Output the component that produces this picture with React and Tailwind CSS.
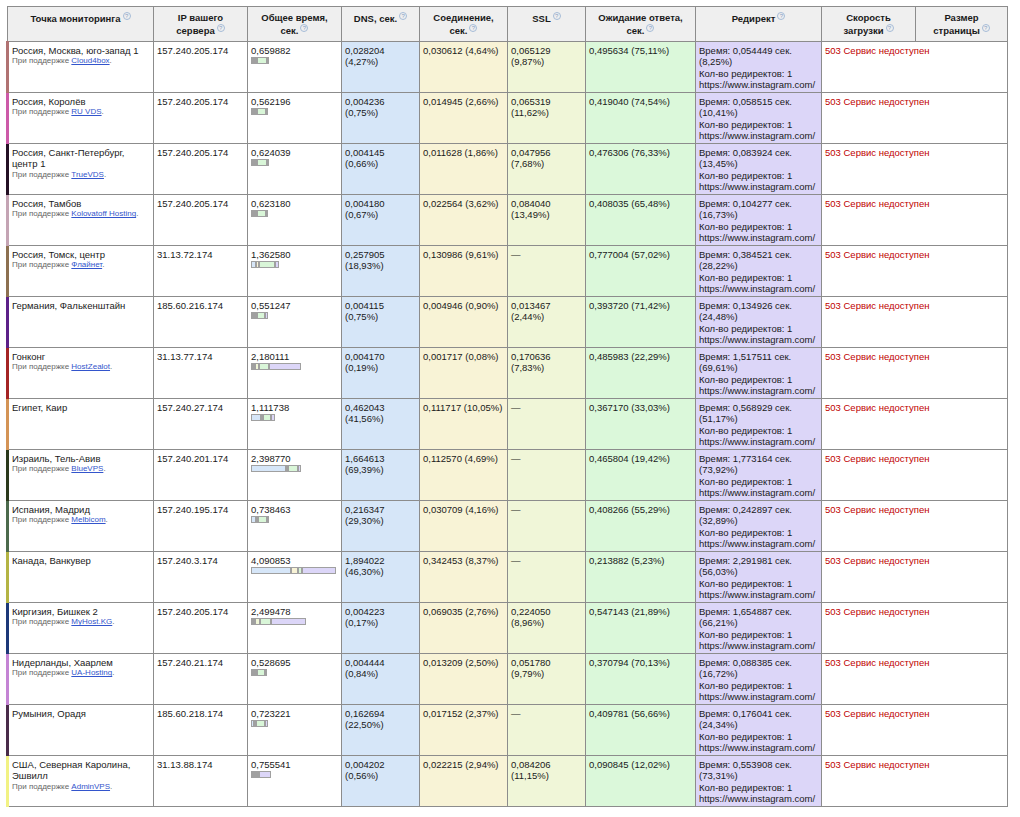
const rows = [
  { name: 'Россия, Москва, юго-запад 1', host: 'Cloud4box', color: '#b07272', ip: '157.240.205.174', total: '0,659882', dns: '0,028204 (4,27%)', conn: '0,030612 (4,64%)', ssl: '0,065129 (9,87%)', wait: '0,495634 (75,11%)', redir: ['0,054449', '8,25%'] },
  { name: 'Россия, Королёв', host: 'RU VDS', color: '#cc5aa8', ip: '157.240.205.174', total: '0,562196', dns: '0,004236 (0,75%)', conn: '0,014945 (2,66%)', ssl: '0,065319 (11,62%)', wait: '0,419040 (74,54%)', redir: ['0,058515', '10,41%'] },
  { name: 'Россия, Санкт-Петербург, центр 1', host: 'TrueVDS', color: '#241024', ip: '157.240.205.174', total: '0,624039', dns: '0,004145 (0,66%)', conn: '0,011628 (1,86%)', ssl: '0,047956 (7,68%)', wait: '0,476306 (76,33%)', redir: ['0,083924', '13,45%'] },
  { name: 'Россия, Тамбов', host: 'Kolovatoff Hosting', color: '#c4a4b4', ip: '157.240.205.174', total: '0,623180', dns: '0,004180 (0,67%)', conn: '0,022564 (3,62%)', ssl: '0,084040 (13,49%)', wait: '0,408035 (65,48%)', redir: ['0,104277', '16,73%'] },
  { name: 'Россия, Томск, центр', host: 'Флайнет', color: '#8c7050', ip: '31.13.72.174', total: '1,362580', dns: '0,257905 (18,93%)', conn: '0,130986 (9,61%)', ssl: null, wait: '0,777004 (57,02%)', redir: ['0,384521', '28,22%'] },
  { name: 'Германия, Фалькенштайн', host: null, color: '#5c2088', ip: '185.60.216.174', total: '0,551247', dns: '0,004115 (0,75%)', conn: '0,004946 (0,90%)', ssl: '0,013467 (2,44%)', wait: '0,393720 (71,42%)', redir: ['0,134926', '24,48%'] },
  { name: 'Гонконг', host: 'HostZealot', color: '#a42424', ip: '31.13.77.174', total: '2,180111', dns: '0,004170 (0,19%)', conn: '0,001717 (0,08%)', ssl: '0,170636 (7,83%)', wait: '0,485983 (22,29%)', redir: ['1,517511', '69,61%'] },
  { name: 'Египет, Каир', host: null, color: '#d49456', ip: '157.240.27.174', total: '1,111738', dns: '0,462043 (41,56%)', conn: '0,111717 (10,05%)', ssl: null, wait: '0,367170 (33,03%)', redir: ['0,568929', '51,17%'] },
  { name: 'Израиль, Тель-Авив', host: 'BlueVPS', color: '#2c3a1c', ip: '157.240.201.174', total: '2,398770', dns: '1,664613 (69,39%)', conn: '0,112570 (4,69%)', ssl: null, wait: '0,465804 (19,42%)', redir: ['1,773164', '73,92%'] },
  { name: 'Испания, Мадрид', host: 'Melbicom', color: '#4c6a4c', ip: '157.240.195.174', total: '0,738463', dns: '0,216347 (29,30%)', conn: '0,030709 (4,16%)', ssl: null, wait: '0,408266 (55,29%)', redir: ['0,242897', '32,89%'] },
  { name: 'Канада, Ванкувер', host: null, color: '#b4b444', ip: '157.240.3.174', total: '4,090853', dns: '1,894022 (46,30%)', conn: '0,342453 (8,37%)', ssl: null, wait: '0,213882 (5,23%)', redir: ['2,291981', '56,03%'] },
  { name: 'Киргизия, Бишкек 2', host: 'MyHost.KG', color: '#1c3878', ip: '157.240.205.174', total: '2,499478', dns: '0,004223 (0,17%)', conn: '0,069035 (2,76%)', ssl: '0,224050 (8,96%)', wait: '0,547143 (21,89%)', redir: ['1,654887', '66,21%'] },
  { name: 'Нидерланды, Хаарлем', host: 'UA-Hosting', color: '#c484d4', ip: '157.240.21.174', total: '0,528695', dns: '0,004444 (0,84%)', conn: '0,013209 (2,50%)', ssl: '0,051780 (9,79%)', wait: '0,370794 (70,13%)', redir: ['0,088385', '16,72%'] },
  { name: 'Румыния, Орадя', host: null, color: '#4a2c4a', ip: '185.60.218.174', total: '0,723221', dns: '0,162694 (22,50%)', conn: '0,017152 (2,37%)', ssl: null, wait: '0,409781 (56,66%)', redir: ['0,176041', '24,34%'] },
  { name: 'США, Северная Каролина, Эшвилл', host: 'AdminVPS', color: '#f2f284', ip: '31.13.88.174', total: '0,755541', dns: '0,004202 (0,56%)', conn: '0,022215 (2,94%)', ssl: '0,084206 (11,15%)', wait: '0,090845 (12,02%)', redir: ['0,553908', '73,31%'] },
];

const num = (s) => (s ? parseFloat(s.split(' ')[0].replace(',', '.')) : 0);

function Help() {
  return (
    <span className="ml-[2px] inline-flex h-[8px] w-[8px] items-center justify-center rounded-full border border-[#a6bcd8] align-[4px] text-[6px] font-normal leading-none text-[#86a0c4]">
      ?
    </span>
  );
}

// bar: segment widths follow the timings, redirect gets whatever is left of the total
function Bar({ row }) {
  const scale = 21;
  const dns = num(row.dns);
  const conn = num(row.conn);
  const ssl = num(row.ssl);
  const wait = num(row.wait);
  const rest = Math.max(0, num(row.total) - dns - conn - ssl - wait);
  const parts = [
    [dns, 'bg-[#d6e6f8]'],
    [conn, 'bg-[#f8f3d6]'],
    [row.ssl ? ssl : -1, 'bg-[#f0f6d8]'],
    [wait, 'bg-[#d9f6d8]'],
    [rest, 'bg-[#dcd6f8]'],
  ];
  return (
    <div className="mt-[1px] flex h-[7px]">
      {parts.map(([t, bg], i) =>
        t < 0 ? null : (
          <span
            key={i}
            className={`box-border h-full border border-[#a0a0a0] ${bg}`}
            style={{ width: Math.max(2, Math.round(t * scale)) }}
          />
        )
      )}
    </div>
  );
}

const th = 'border border-[#8c8c8c] bg-[#efefef] px-[3px] pt-[5px] pb-[3px] text-center align-top font-bold leading-[12.4px]';
const td = 'border border-[#8c8c8c] px-[3px] pt-[3px] pb-[1px] align-top leading-[11.5px]';

export default function App() {
  return (
    <div className="min-h-screen bg-white pt-[6px] pl-[6px] font-['Liberation_Sans',Arial,sans-serif] text-[9.5px] text-[#1a1a1a]">
      <table className="w-[1000px] table-fixed border-collapse">
        <colgroup>
          <col className="w-[146px]" />
          <col className="w-[94px]" />
          <col className="w-[94px]" />
          <col className="w-[78px]" />
          <col className="w-[88px]" />
          <col className="w-[78px]" />
          <col className="w-[110px]" />
          <col className="w-[126px]" />
          <col className="w-[94px]" />
          <col className="w-[92px]" />
        </colgroup>
        <thead>
          <tr>
            <th className={th}>Точка мониторинга<Help /></th>
            <th className={th}>IP вашего<br />сервера<Help /></th>
            <th className={th}>Общее время,<br />сек.<Help /></th>
            <th className={th}>DNS, сек.<Help /></th>
            <th className={th}>Соединение,<br />сек.<Help /></th>
            <th className={th}>SSL<Help /></th>
            <th className={th}>Ожидание ответа,<br />сек.<Help /></th>
            <th className={th}>Редирект<Help /></th>
            <th className={th}>Скорость<br />загрузки<Help /></th>
            <th className={th}>Размер<br />страницы<Help /></th>
          </tr>
        </thead>
        <tbody>
          {rows.map((r) => (
            <tr key={r.name}>
              <td className={`${td} border-l-[3px]`} style={{ borderLeftColor: r.color }}>
                <div>{r.name}</div>
                {r.host && (
                  <div className="text-[8px] leading-[10px] text-[#666]">
                    При поддержке <a href="#" className="text-[#3355cc] underline">{r.host}</a>.
                  </div>
                )}
              </td>
              <td className={td}>{r.ip}</td>
              <td className={td}>
                <div>{r.total}</div>
                <Bar row={r} />
              </td>
              <td className={`${td} bg-[#d6e6f8]`}>{r.dns}</td>
              <td className={`${td} bg-[#f8f3d6]`}>{r.conn}</td>
              <td className={`${td} bg-[#f0f6d8]`}>{r.ssl || '—'}</td>
              <td className={`${td} bg-[#dbf8da]`}>{r.wait}</td>
              <td className={`${td} bg-[#dcd6f8]`}>
                <div>Время: {r.redir[0]} сек.</div>
                <div>({r.redir[1]})</div>
                <div>Кол-во редиректов: 1</div>
                <div className="whitespace-nowrap">https://www.instagram.com/</div>
              </td>
              <td colSpan={2} className={`${td} text-[#c00000]`}>503 Сервис недоступен</td>
            </tr>
          ))}
        </tbody>
      </table>
    </div>
  );
}
